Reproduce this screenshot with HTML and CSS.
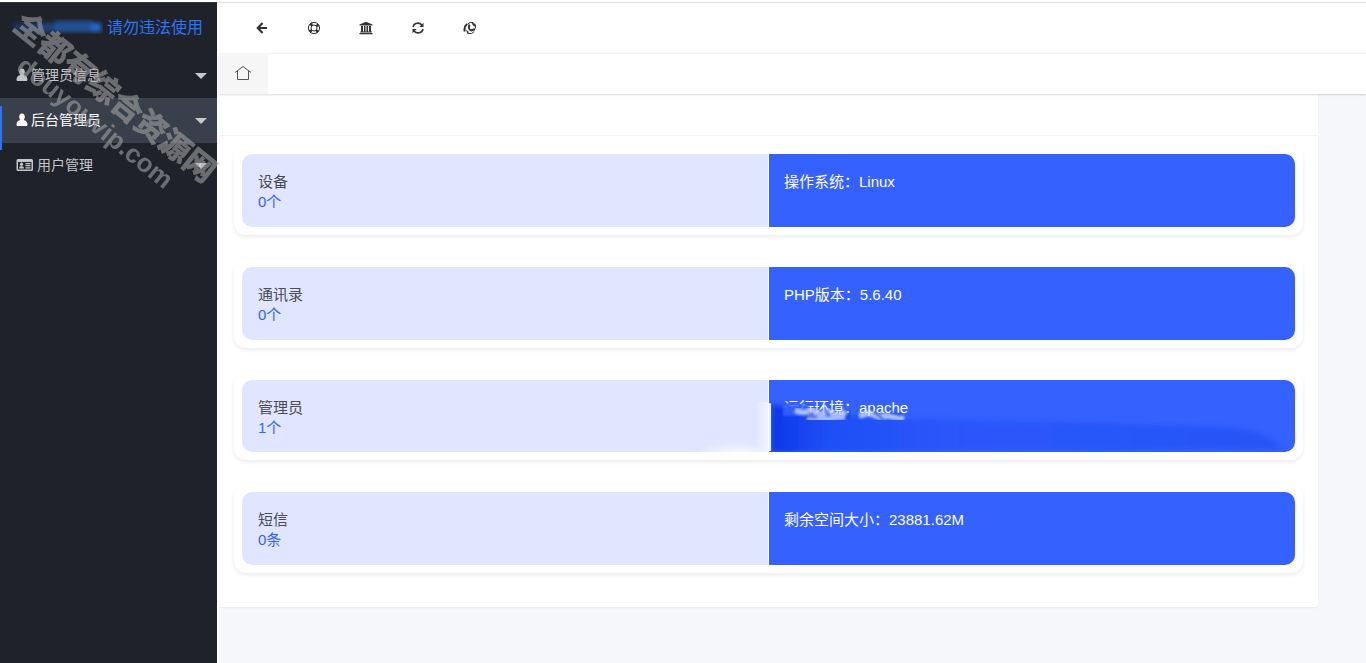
FILE: index.html
```html
<!DOCTYPE html>
<html lang="zh-CN">
<head>
<meta charset="utf-8">
<meta name="viewport" content="width=device-width, initial-scale=1">
<title>后台管理</title>
<link rel="stylesheet" href="styles.css">
</head>
<body>
<div class="app">
  <aside class="sidebar">
    <div class="brand">
      <svg class="brand-mark" width="92" height="20" viewBox="0 0 92 20" aria-hidden="true">
        <defs><filter id="soft"><feGaussianBlur stdDeviation="2.2"/></filter></defs>
        <g filter="url(#soft)" fill="#2368cf">
          <rect x="3" y="7" width="24" height="8" opacity=".3"/>
          <rect x="26" y="7" width="20" height="9" opacity=".45"/>
          <rect x="44" y="5" width="38" height="11" opacity=".65"/>
          <rect x="80" y="7" width="10" height="9"/>
        </g>
      </svg>
      <span>请勿违法使用</span>
    </div>
    <nav class="menu">
      <a class="item" href="#"><svg width="12" height="14" viewBox="0 0 12 14"><path fill="currentColor" d="M6 .5c1.800 0 2.800 1.300 2.800 3.200C8.800 5.300 8.200 6.500 7.500 7c2.500.6 4 2 4 4.800 0 .8-.5 1.200-1.300 1.200H1.800C1 13 .5 12.600.5 11.800.5 9 2 7.600 4.500 7 3.800 6.500 3.200 5.300 3.200 3.700 3.200 1.800 4.200.5 6 .5z"/></svg><span>管理员信息</span><i class="caret"></i></a>
      <a class="item active" href="#"><svg width="12" height="14" viewBox="0 0 12 14"><path fill="currentColor" d="M6 .5c1.800 0 2.800 1.300 2.800 3.200C8.800 5.300 8.200 6.500 7.500 7c2.500.6 4 2 4 4.800 0 .8-.5 1.200-1.300 1.200H1.800C1 13 .5 12.600.5 11.800.5 9 2 7.600 4.500 7 3.800 6.500 3.200 5.300 3.200 3.700 3.200 1.800 4.200.5 6 .5z"/></svg><span>后台管理员</span><i class="caret"></i></a>
      <a class="item" href="#"><svg width="18" height="14" viewBox="0 0 18 14"><path fill="currentColor" fill-rule="evenodd" d="M2 1h13.500q1.500 0 1.500 1.500v9q0 1.500-1.500 1.500H2Q.5 13 .5 11.500v-9Q.5 1 2 1zm0 3v7.500h13.500V4z"/><circle cx="5.500" cy="6.200" r="1.600" fill="currentColor"/><path fill="currentColor" d="M3 10.500q0-2.600 2.500-2.600T8 10.500zM9.500 5h5v1.300h-5zM9.500 7h5v1.200h-5zM9.500 9.200h5v1.200h-5z"/></svg><span>用户管理</span><i class="caret"></i></a>
    </nav>
    <svg class="watermark" width="230" height="210" viewBox="0 0 230 210" aria-hidden="true">
      <g font-weight="700" opacity=".56">
        <text class="wm-cn" transform="translate(12 25) rotate(39)">全都有综合资源网</text>
        <text class="wm-en" transform="translate(15 66) rotate(39)">douyouvip.com</text>
      </g>
    </svg>
  </aside>
  <div class="main">
    <header class="toolbar">
      <button type="button" aria-label="返回"><svg width="14" height="14" viewBox="0 0 14 14"><path d="M7.500 2 2.800 7l4.700 5M3 7h9" fill="none" stroke="currentColor" stroke-width="2.200"/></svg></button>
      <button type="button" aria-label="帮助"><svg width="14" height="14" viewBox="0 0 14 14"><g fill="none" stroke="currentColor"><circle cx="7" cy="7" r="5.600" stroke-width="1"/><circle cx="7" cy="7" r="3" stroke-width="1"/><circle cx="7" cy="7" r="4.400" stroke-width="3" stroke-dasharray="2.600 4.310" stroke-dashoffset="-2.150"/></g></svg></button>
      <button type="button" aria-label="首页"><svg width="14" height="14" viewBox="0 0 14 14"><path fill="currentColor" d="M7 .8 13.500 3.500v1H.5v-1zM2 5h2v5.500h1V5h1.500v5.500h1V5H9v5.500h1V5h2v5.500h.8v1H1.200v-1H2zM.5 12h13v1.300H.5z"/></svg></button>
      <button type="button" aria-label="刷新"><svg width="14" height="14" viewBox="0 0 14 14"><path d="M2 6a5 5 0 0 1 8.800-2M12 8a5 5 0 0 1-8.800 2" fill="none" stroke="currentColor" stroke-width="1.600"/><path fill="currentColor" d="M12.500 1.800V6H8.300zM1.500 12.200V8H5.700z"/></svg></button>
      <button type="button" aria-label="清理"><svg width="14" height="14" viewBox="0 0 14 14"><g fill="none" stroke="currentColor"><path stroke-width="1" d="M5 12.600Q9 13.500 11.300 10.500M4.500 3Q7 .8 10 1.500q3.500 2 2.500 6"/><path stroke-width="2" d="M4 3Q.6 6 1.800 10.500"/><path stroke-width="2" d="M6.500 3.500Q4.500 8 8.500 9.500l3.500-1.500"/></g><path fill="currentColor" d="m8.500 1.300 4 2.500-1 2-2-2zM3 8.500l3 2.500-1.500 2z"/></svg></button>
    </header>
    <div class="tabs">
      <a class="tab" href="#" aria-label="主页"><svg width="18" height="16" viewBox="0 0 18 16"><path d="M1 7.500 9 1.500l8 6M3.500 6v8.500h11V6" fill="none" stroke="#555" stroke-width="1"/></svg></a>
    </div>
    <main class="content">
      <section class="panel">
        <div class="panel-head"></div>
        <div class="cards">
          <article class="card">
            <div class="stat"><p>设备</p><p class="num">0个</p></div>
            <div class="info">操作系统：Linux</div>
          </article>
          <article class="card">
            <div class="stat"><p>通讯录</p><p class="num">0个</p></div>
            <div class="info">PHP版本：5.6.40</div>
          </article>
          <article class="card smudged">
            <div class="stat"><p>管理员</p><p class="num">1个</p></div>
            <div class="info">运行环境：apache
              <svg class="smear" viewBox="0 0 526 74" preserveAspectRatio="none" aria-hidden="true">
                <defs>
                  <filter id="blur1"><feGaussianBlur stdDeviation="1.200"/></filter>
                  <filter id="blur2"><feGaussianBlur stdDeviation="3 2"/></filter>
                  <linearGradient id="deep" x1="0" x2="1"><stop offset="0" stop-color="#0c36e6"/><stop offset=".12" stop-color="#1c4bf4" stop-opacity=".8"/><stop offset=".4" stop-color="#2450f8" stop-opacity=".6"/><stop offset="1" stop-color="#1e4df0" stop-opacity=".6"/></linearGradient>
                </defs>
                <path filter="url(#blur2)" fill="url(#deep)" d="M2 25Q80 40 150 40L330 44 460 49Q500 52 513 71L2 74z"/>
                <path filter="url(#blur1)" fill="#3461ff" d="M14 25h26v12H14z" opacity=".85"/>
                <g filter="url(#blur1)" fill="none" stroke="#dbe6ff" stroke-width="6" opacity=".7">
                  <path d="M26 31l9 3 8-4 7 6 9-4 9 5 9-4M38 39l20 1 18-2M90 37l10-3 10 4 8-1 17 3"/>
                </g>
                <g filter="url(#blur1)" fill="none" stroke="#1740bb" stroke-width="2" opacity=".7"><path d="M32 37l16 1M56 31l5 6M80 32v7M104 32l10 8M122 33l10 3"/></g>
                <path d="M1 24v49" stroke="#e8efff" stroke-width="2"/>
              </svg>
            </div>
          </article>
          <article class="card">
            <div class="stat"><p>短信</p><p class="num">0条</p></div>
            <div class="info">剩余空间大小：23881.62M</div>
          </article>
        </div>
      </section>
    </main>
  </div>
</div>
</body>
</html>
```

FILE: styles.css
```css
* { box-sizing: border-box; }
body {
  margin: 0;
  font-family: "Liberation Sans", "Noto Sans CJK SC", sans-serif;
  font-size: 14px;
  color: #333;
  background: #fff;
}
p { margin: 0; }
a { color: inherit; text-decoration: none; }
svg { display: block; flex: none; }

.app {
  display: flex;
  min-height: 100vh;
  padding-top: 2px;
}
.sidebar {
  position: relative;
  flex: none;
  width: 217px;
  border-top: 1px solid #32353c;
  background: #20222a;
}
.brand {
  display: flex;
  align-items: center;
  gap: 4px;
  height: 50px;
  padding: 0 0 4px 11px;
  font-size: 16px;
  color: #2d74f5;
  white-space: nowrap;
}
.item {
  position: relative;
  display: flex;
  align-items: center;
  gap: 3px;
  height: 45px;
  padding: 0 10px 0 16px;
  color: #c4c5c8;
}
.item span { padding-bottom: 4px; }
.item svg { margin-bottom: 2px; }
.item.active { background: #3a3f4c; color: #fff; }
.item.active::before {
  content: "";
  position: absolute;
  z-index: 1;
  left: 0;
  top: 8px;
  width: 2px;
  height: 44px;
  background: #2d74f5;
}
.caret {
  margin-left: auto;
  border: 6px solid transparent;
  border-top-color: #c8c9cb;
  border-bottom: 0;
}
.watermark {
  position: absolute;
  z-index: 2;
  left: 0;
  top: 0;
  overflow: visible;
  pointer-events: none;
  fill: #a8a8a8;
  stroke: #a8a8a8;
}
.wm-cn { font-size: 31px; stroke-width: 1px; }
.wm-en { font-size: 26px; stroke-width: 0; }

.main {
  display: flex;
  flex: 1;
  flex-direction: column;
  min-width: 0;
  padding-left: 2px;
  border-top: 1px solid #e0e0e0;
}
.toolbar {
  display: flex;
  gap: 12px;
  height: 50px;
  padding-left: 23px;
}
.toolbar button {
  display: flex;
  align-items: center;
  justify-content: center;
  width: 40px;
  padding: 0;
  border: 0;
  background: none;
  color: #333;
}
.tabs {
  position: relative;
  display: flex;
  height: 41px;
  border-top: 1px solid #f4f4f4;
  background: #fff;
  box-shadow: 0 1px 2px rgba(0, 0, 0, .15);
}
.tab {
  display: flex;
  align-items: center;
  justify-content: center;
  width: 49px;
  padding: 0 2px 2px 0;
  background: #f6f6f6;
}
.content {
  flex: 1;
  padding-right: 48px;
  background: #f6f7fa;
}
.panel {
  padding-bottom: 34px;
  border-radius: 2px;
  background: #fff;
  box-shadow: 0 1px 2px rgba(0, 0, 0, .06);
}
.panel-head {
  height: 42px;
  border-bottom: 1px solid #f4f4f4;
}
.cards {
  display: grid;
  gap: 24px;
  padding: 10px 15px 0;
}
.card {
  display: grid;
  grid-template-columns: 1fr 1fr;
  gap: 1px;
  padding: 8px;
  border-radius: 12px;
  background: #fff;
  box-shadow: 0 2px 4px rgba(0, 0, 0, .08);
  font-size: 15px;
  line-height: 20px;
}
.stat {
  padding: 18px 16px 15px;
  border-radius: 10px 0 0 10px;
  background: #e0e6ff;
  color: #494c55;
}
.num { color: #3461ff; }
.info {
  position: relative;
  overflow: hidden;
  padding: 18px 15px 15px;
  border-radius: 0 10px 10px 0;
  background: #3461ff;
  color: #fff;
}
.smudged .stat,
.smudged .info { padding-bottom: 14px; }
.smudged .stat {
  background:
    radial-gradient(ellipse 40px 10px at 94% 100%, #f4f7ff, transparent),
    linear-gradient(to left, #f0f4ff, transparent) right bottom / 12px 50px no-repeat,
    #e0e6ff;
}
.smear {
  position: absolute;
  inset: 0;
  width: 100%;
  height: 100%;
}
```
